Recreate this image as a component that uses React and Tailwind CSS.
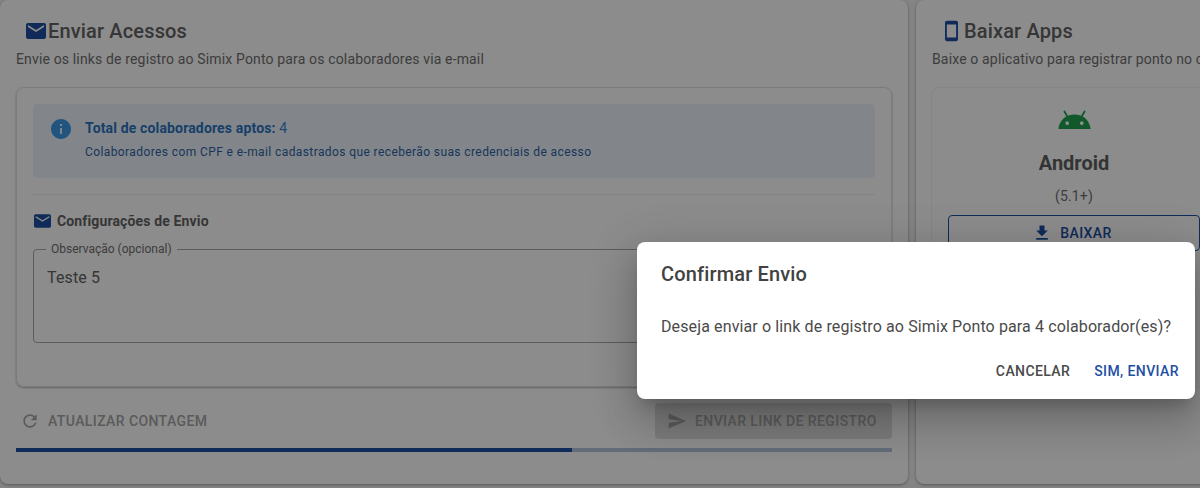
import { useState } from 'react';

const MailIcon = ({ className }) => (
  <svg viewBox="2 4 20 16" className={className} fill="currentColor">
    <path d="M20 4H4c-1.1 0-2 .9-2 2v12c0 1.1.9 2 2 2h16c1.1 0 2-.9 2-2V6c0-1.1-.9-2-2-2zm0 4-8 5-8-5V6l8 5 8-5v2z" />
  </svg>
);

const PhoneIcon = ({ className }) => (
  <svg viewBox="5 1 14 22" className={className} fill="currentColor">
    <path d="M17 1.01 7 1c-1.1 0-2 .9-2 2v18c0 1.1.9 2 2 2h10c1.1 0 2-.9 2-2V3c0-1.1-.9-1.99-2-1.99zM17 19H7V5h10v14z" />
  </svg>
);

const InfoIcon = ({ className }) => (
  <svg viewBox="2 2 20 20" className={className} fill="currentColor">
    <path d="M12 2C6.48 2 2 6.48 2 12s4.48 10 10 10 10-4.48 10-10S17.52 2 12 2zm1 15h-2v-6h2v6zm0-8h-2V7h2v2z" />
  </svg>
);

const AndroidIcon = ({ className }) => (
  <svg viewBox="1 5 22 13" className={className} fill="currentColor">
    <path d="M17.6 9.48l1.84-3.18c.16-.31.04-.69-.26-.85-.29-.15-.65-.06-.83.22l-1.88 3.24c-2.86-1.21-6.08-1.21-8.94 0L5.65 5.67c-.19-.29-.58-.38-.87-.2-.28.18-.37.54-.22.83L6.4 9.48C3.3 11.25 1.28 14.44 1 18h22c-.28-3.56-2.3-6.75-5.4-8.52zM7 15.25c-.69 0-1.25-.56-1.25-1.25s.56-1.25 1.25-1.25 1.25.56 1.25 1.25-.56 1.25-1.25 1.25zm10 0c-.69 0-1.25-.56-1.25-1.25s.56-1.25 1.25-1.25 1.25.56 1.25 1.25-.56 1.25-1.25 1.25z" />
  </svg>
);

const DownloadIcon = ({ className }) => (
  <svg viewBox="0 0 24 24" className={className} fill="currentColor">
    <path d="M19 9h-4V3H9v6H5l7 7 7-7zM5 18v2h14v-2H5z" />
  </svg>
);

const RefreshIcon = ({ className }) => (
  <svg viewBox="0 0 24 24" className={className} fill="currentColor">
    <path d="M17.65 6.35C16.2 4.9 14.21 4 12 4c-4.42 0-7.99 3.58-7.99 8s3.57 8 7.99 8c3.73 0 6.84-2.55 7.73-6h-2.08c-.82 2.33-3.04 4-5.65 4-3.31 0-6-2.69-6-6s2.69-6 6-6c1.66 0 3.14.69 4.22 1.78L13 11h7V4l-2.35 2.35z" />
  </svg>
);

const SendIcon = ({ className }) => (
  <svg viewBox="0 0 24 24" className={className} fill="currentColor">
    <path d="M2.01 21 23 12 2.01 3 2 10l15 2-15 2z" />
  </svg>
);

export default function App() {
  const [obs, setObs] = useState('Teste 5');

  return (
    <div className="relative h-[488px] w-[1200px] overflow-hidden bg-[#f0f0f0] font-['Roboto',sans-serif] text-[#636363]">
      <div className="flex gap-2">
        {/* Enviar acessos */}
        <div className="h-[484px] w-[908px] shrink-0 rounded-lg bg-white px-4 pt-[18px] shadow-[0_1px_3px_rgba(0,0,0,0.35)]">
          <div className="flex h-[26px] items-center pl-2.5">
            <MailIcon className="h-4 w-5 text-[#1e4fa3]" />
            <span className="ml-0.5 text-[20px] leading-[26px] font-medium tracking-[0.15px]">Enviar Acessos</span>
          </div>
          <p className="mt-[5px] text-[14px] leading-[21px] tracking-[0.15px] text-[#707070]">
            Envie os links de registro ao Simix Ponto para os colaboradores via e-mail
          </p>

          <div className="mt-[17px] h-[300px] rounded-lg border border-[#e0e0e0] px-4 pt-4 shadow-[0_1px_2px_rgba(0,0,0,0.3)]">
            <div className="flex h-[74px] rounded bg-[#edf5fb] pl-[18px]">
              <InfoIcon className="mt-[15px] h-5 w-5 text-[#3d9be9]" />
              <div className="ml-3.5 pt-[14px]">
                <div className="text-[14px] leading-[21px] tracking-[0.15px] text-[#3a86d0]">
                  <span className="font-bold text-[#2a74c0]">Total de colaboradores aptos:</span> 4
                </div>
                <div className="mt-1 text-[12px] leading-[18px] tracking-[0.4px] text-[#2f62a5]">
                  Colaboradores com CPF e e-mail cadastrados que receberão suas credenciais de acesso
                </div>
              </div>
            </div>

            <div className="mt-4 border-t border-[#efefef] pt-4">
              <div className="flex h-5 items-center pl-px">
                <MailIcon className="h-[14px] w-[17px] text-[#1e4fa3]" />
                <span className="ml-1.5 text-[14px] font-bold tracking-[0.14px] text-[#636363]">Configurações de Envio</span>
              </div>
            </div>

            <fieldset className="mt-[11px] h-[101px] rounded border border-[#a8a8a8] pl-[13px]">
              <legend className="ml-[-1px] px-[5px] text-[12px] leading-[14px] text-[#707070]">
                Observação (opcional)
              </legend>
              <textarea
                value={obs}
                onChange={(e) => setObs(e.target.value)}
                className="mt-[10px] h-[65px] w-full resize-none bg-transparent text-[16px] leading-6 tracking-[0.15px] text-[#636363] outline-none"
              />
            </fieldset>
          </div>

          <div className="mt-4 flex h-[36px] items-center justify-between">
            <button className="flex items-center pl-1 text-[14px] font-medium tracking-[0.4px] text-[#a6a6a6]">
              <RefreshIcon className="h-5 w-5" />
              <span className="ml-2">ATUALIZAR CONTAGEM</span>
            </button>
            <button className="flex h-[36px] w-[237px] items-center rounded bg-[#e0e0e0] pl-3 text-[14px] font-medium tracking-[0.4px] text-[#a6a6a6]">
              <SendIcon className="h-5 w-5" />
              <span className="ml-2">ENVIAR LINK DE REGISTRO</span>
            </button>
          </div>

          <div className="mt-[9px] h-1 w-full bg-[#b6c5dc]">
            <div className="h-1 w-[556px] bg-[#1e4fa3]" />
          </div>
        </div>

        {/* Baixar apps */}
        <div className="h-[484px] w-[300px] shrink-0 rounded-lg bg-white pl-4 pt-[18px] shadow-[0_1px_3px_rgba(0,0,0,0.35)]">
          <div className="flex h-[26px] items-center pl-[13px]">
            <PhoneIcon className="h-[22px] w-[13px] text-[#1e4fa3]" />
            <span className="ml-1.5 text-[20px] leading-[26px] font-medium tracking-[0.15px]">Baixar Apps</span>
          </div>
          <p className="mt-[5px] whitespace-nowrap text-[14px] leading-[21px] tracking-[0.15px] text-[#707070]">
            Baixe o aplicativo para registrar ponto no celular
          </p>
          <div className="mt-[17px] -ml-px h-[300px] w-[300px] rounded-lg border border-[#f2f2f2] pt-[22px] pl-4">
            <div className="flex w-[252px] flex-col items-center">
              <AndroidIcon className="h-[19px] w-[33px] text-[#1fa34e]" />
              <div className="mt-[19px] text-[20px] leading-[30px] font-bold text-[#5f5f5f]">Android</div>
              <div className="mt-2 text-[14px] leading-[21px] tracking-[0.15px] text-[#707070]">(5.1+)</div>
              <button className="mt-2 flex h-[36px] w-full items-center justify-center rounded border border-[#1e4fa3] pr-1 text-[14px] font-medium tracking-[0.4px] text-[#1e4fa3]">
                <DownloadIcon className="h-5 w-5" />
                <span className="ml-2">BAIXAR</span>
              </button>
            </div>
          </div>
        </div>
      </div>

      {/* backdrop + dialog */}
      <div className="absolute inset-0 bg-black/45" />
      <div className="absolute top-[242px] left-[637px] h-[157px] w-[558px] rounded-lg bg-white shadow-[0_11px_15px_-7px_rgba(0,0,0,0.2),0_24px_38px_3px_rgba(0,0,0,0.14),0_9px_46px_8px_rgba(0,0,0,0.12)]">
        <h2 className="px-6 pt-4 text-[20px] leading-8 font-medium tracking-[0.15px] text-[#424242]">Confirmar Envio</h2>
        <p className="mt-[25px] px-6 text-[16px] leading-6 tracking-[0.12px] whitespace-nowrap text-[#4a4a4a]">
          Deseja enviar o link de registro ao Simix Ponto para 4 colaborador(es)?
        </p>
        <div className="mt-5 flex justify-end gap-6 pr-4">
          <button className="text-[14px] leading-6 font-medium tracking-[0.4px] text-[#4a4a4a]">CANCELAR</button>
          <button className="text-[14px] leading-6 font-medium tracking-[0.4px] text-[#1e4fa3]">SIM, ENVIAR</button>
        </div>
      </div>
    </div>
  );
}
